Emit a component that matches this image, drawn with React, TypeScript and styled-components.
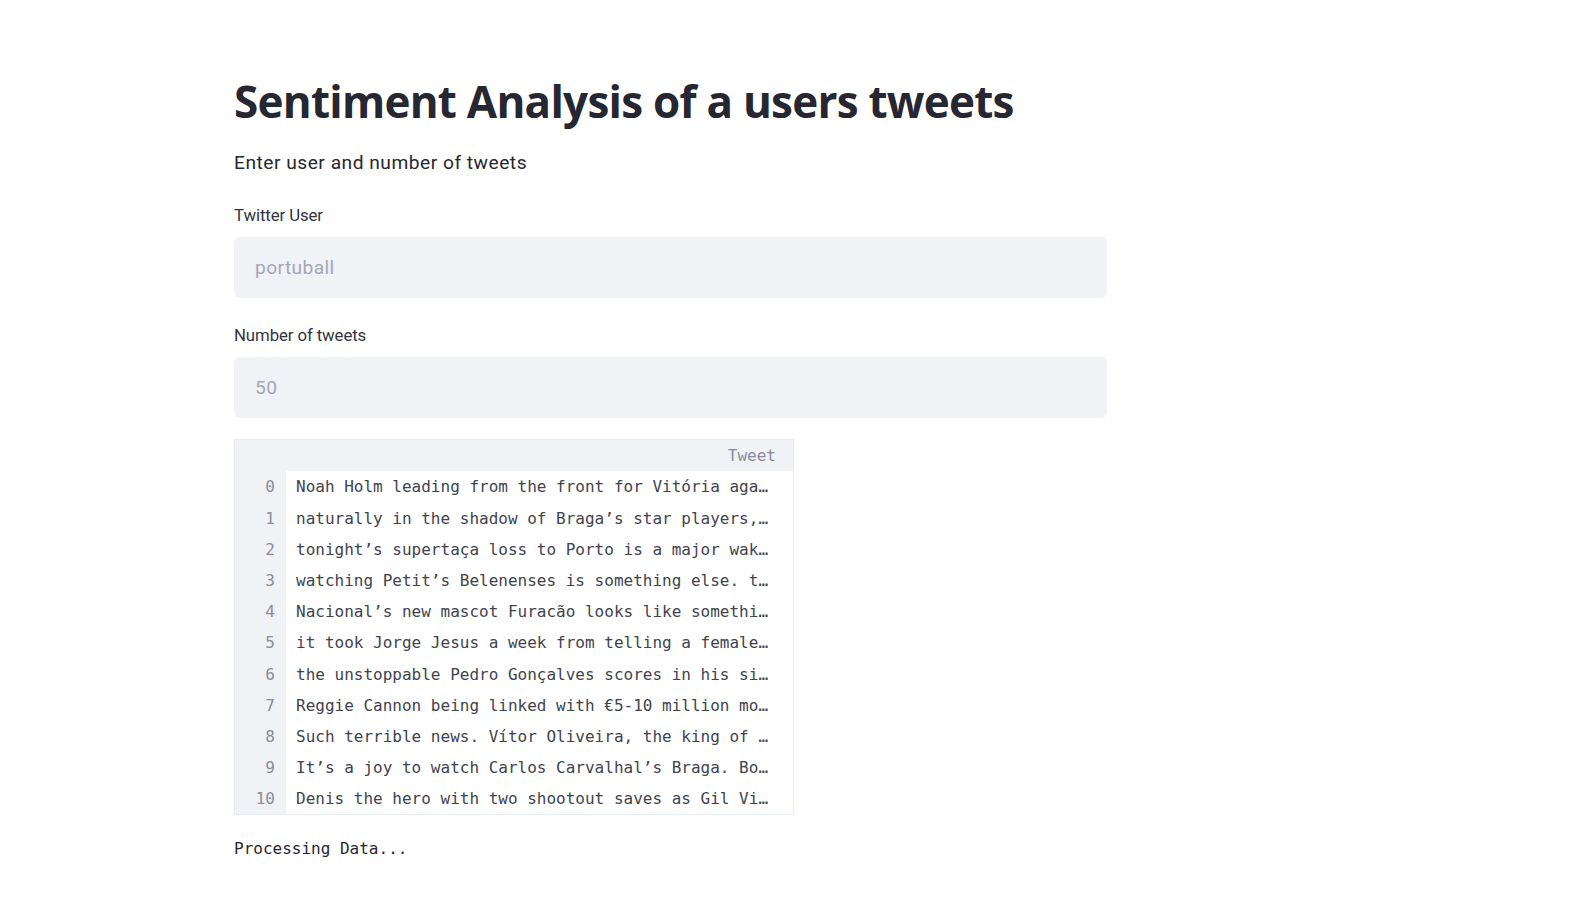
import React from "react";
import styled, { createGlobalStyle } from "styled-components";

const GlobalStyle = createGlobalStyle`
  html, body {
    margin: 0;
    padding: 0;
    background: #ffffff;
  }
  body {
    font-family: Roboto, "Noto Sans", "Liberation Sans", sans-serif;
    color: #262730;
    -webkit-font-smoothing: antialiased;
  }
  #root {
    min-height: 100vh;
  }
`;

const Main = styled.main`
  display: flex;
  flex-direction: column;
  align-items: flex-start;
  padding: 78px 0 60px 234px;
  width: 873px;
`;

const Title = styled.h1`
  margin: -3px 0 0;
  font-family: "Open Sans", Roboto, sans-serif;
  font-size: 44px;
  font-weight: 700;
  line-height: 52.8px;
  color: #262730;
  letter-spacing: -0.75px;
`;

const Subtitle = styled.p`
  margin: 20.6px 0 0;
  font-size: 19.2px;
  line-height: 30.7px;
  letter-spacing: 0.5px;
  color: #262730;
`;

const Field = styled.div<{ $first?: boolean }>`
  display: flex;
  flex-direction: column;
  align-self: stretch;
  gap: 7.8px;
  margin-top: ${(p) => (p.$first ? "23.2px" : "23.8px")};
`;

const Label = styled.label`
  font-size: 16.8px;
  line-height: 26.9px;
  letter-spacing: -0.1px;
  color: #31333f;
`;

const InputBox = styled.div`
  box-sizing: border-box;
  height: 61.5px;
  width: 873px;
  background: #f0f2f6;
  border-radius: 6px;
  display: flex;
  align-items: center;
  padding: 0 21px;
  font-size: 19.2px;
  letter-spacing: 0.4px;
  color: #a3a8b8;
`;

const Table = styled.div`
  box-sizing: border-box;
  margin-top: 20.7px;
  width: 560px;
  border: 1px solid #e6eaf1;
  display: grid;
  grid-template-columns: 51px 1fr;
  grid-auto-rows: 31.2px;
  font-family: "DejaVu Sans Mono", "Liberation Mono", monospace;
  font-size: 16px;
`;

const Corner = styled.div`
  background: #f0f2f6;
`;

const HeaderCell = styled.div`
  background: #f0f2f6;
  display: flex;
  align-items: center;
  justify-content: flex-end;
  padding-right: 17px;
  color: #8a8d99;
`;

const IndexCell = styled.div`
  background: #f0f2f6;
  display: flex;
  align-items: center;
  justify-content: flex-end;
  padding-right: 11px;
  color: #8a8d99;
`;

const DataCell = styled.div`
  display: flex;
  align-items: center;
  padding-left: 10px;
  white-space: pre;
  overflow: hidden;
  color: #41434e;
`;

const Status = styled.pre`
  margin: 21px 0 0;
  font-family: "DejaVu Sans Mono", "Liberation Mono", monospace;
  font-size: 16px;
  line-height: 25.6px;
  color: #262730;
`;

const tweets = [
  "Noah Holm leading from the front for Vitória aga…",
  "naturally in the shadow of Braga’s star players,…",
  "tonight’s supertaça loss to Porto is a major wak…",
  "watching Petit’s Belenenses is something else. t…",
  "Nacional’s new mascot Furacão looks like somethi…",
  "it took Jorge Jesus a week from telling a female…",
  "the unstoppable Pedro Gonçalves scores in his si…",
  "Reggie Cannon being linked with €5-10 million mo…",
  "Such terrible news. Vítor Oliveira, the king of …",
  "It’s a joy to watch Carlos Carvalhal’s Braga. Bo…",
  "Denis the hero with two shootout saves as Gil Vi…",
];

export default function App() {
  return (
    <>
      <GlobalStyle />
      <Main>
        <Title>Sentiment Analysis of a users tweets</Title>
        <Subtitle>Enter user and number of tweets</Subtitle>
        <Field $first>
          <Label>Twitter User</Label>
          <InputBox>portuball</InputBox>
        </Field>
        <Field>
          <Label>Number of tweets</Label>
          <InputBox>50</InputBox>
        </Field>
        <Table>
          <Corner />
          <HeaderCell>Tweet</HeaderCell>
          {tweets.map((t, i) => (
            <React.Fragment key={i}>
              <IndexCell>{i}</IndexCell>
              <DataCell>{t}</DataCell>
            </React.Fragment>
          ))}
        </Table>
        <Status>Processing Data...</Status>
      </Main>
    </>
  );
}
